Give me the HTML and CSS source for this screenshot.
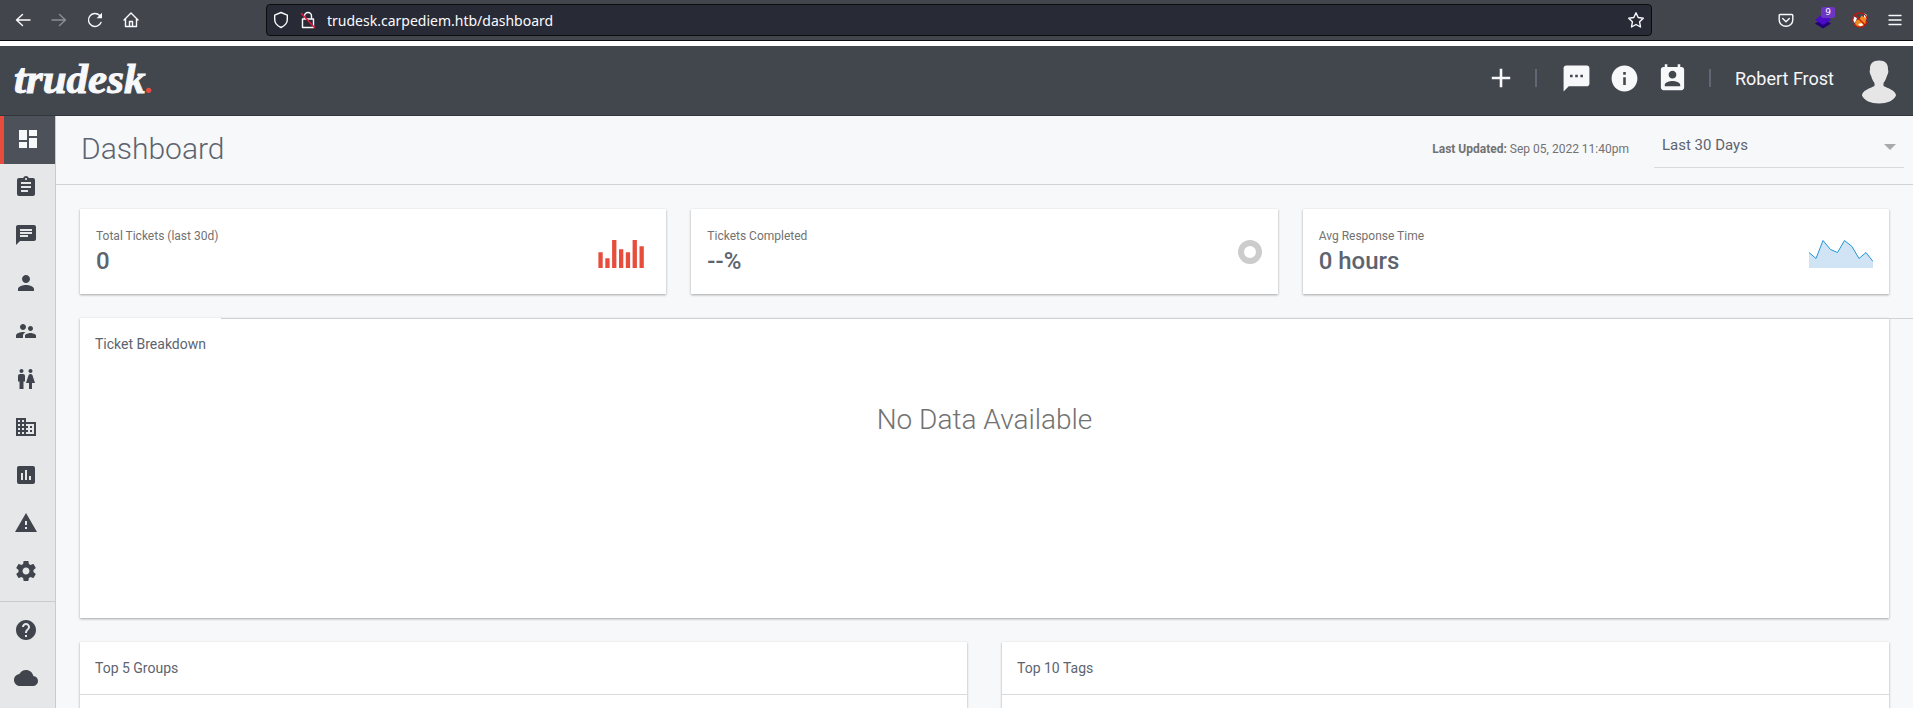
FILE: index.html
```html
<!DOCTYPE html>
<html lang="en">
<head>
<meta charset="utf-8">
<title>Trudesk - Dashboard</title>
<link rel="stylesheet" href="styles.css">
</head>
<body>
<div class="browser">
  <div class="browser-nav">
    <button class="tool" aria-label="Back"><svg width="16" height="16" viewBox="0 0 16 16"><path d="M15 8H1.500M7.500 2.500L1.500 8l6 5.500"/></svg></button>
    <button class="tool dim" aria-label="Forward"><svg width="16" height="16" viewBox="0 0 16 16"><path d="M1 8h13.500M8.500 2.500l6 5.500-6 5.500"/></svg></button>
    <button class="tool" aria-label="Reload"><svg width="16" height="16" viewBox="0 0 16 16"><path d="M14 10.500A6.500 6.500 0 1 1 12.500 3.300"/><path class="solid" d="M15 .8v5.400H9.600z"/></svg></button>
    <button class="tool" aria-label="Home"><svg width="16" height="16" viewBox="0 0 16 16"><path d="M1 8l7-7 7 7M2.500 7v7.500h11V7M6.500 14.500v-5h3v5"/></svg></button>
  </div>
  <div class="urlbar">
    <svg class="line" width="16" height="18" viewBox="0 0 16 18"><path d="M8 1.500l6.300 2.600v4.400c0 4-3 6.500-6.300 8-3.300-1.500-6.300-4-6.300-8V4.100z"/></svg>
    <svg class="line" width="16" height="18" viewBox="0 0 16 18"><path d="M4.500 8V5a3.500 3.500 0 0 1 7 0v3M2.500 8h11v8.500h-11z"/><path class="slash" d="M1.500 2.500l13 14"/></svg>
    <input class="url" type="text" aria-label="Address" value="trudesk.carpediem.htb/dashboard">
    <button class="tool" aria-label="Bookmark"><svg width="18" height="18" viewBox="0 0 18 18"><path d="M9 1.800l2.200 4.700 5.100.7-3.700 3.600.9 5.200L9 13.500 4.500 16l.9-5.200L1.700 7.200l5.100-.7z"/></svg></button>
  </div>
  <div class="browser-ext">
    <button class="tool" aria-label="Pocket"><svg width="16" height="16" viewBox="0 0 16 16"><path d="M2.200 2.500h11.600q1 0 1 1V8a6.800 6.300 0 0 1-13.600 0V3.500q0-1 1-1zM4.700 6.500L8 9.700l3.300-3.200"/></svg></button>
    <button class="tool ext" aria-label="Layers extension"><svg width="18" height="18" viewBox="0 0 18 18"><path class="layer-low" d="M1 12.500L9 8l8 4.500L9 17.500z"/><path class="layer-top" d="M1 9l8-6.500L17 9l-8 5z"/></svg><span class="badge">9</span></button>
    <button class="tool" aria-label="Proxy extension"><svg width="16" height="16" viewBox="0 0 16 16"><path class="fox-white" d="M1 4l4 2-2 5-2-2zM12 1.500l2.500 1L15 7l-3 1z"/><path class="fox" d="M3 12l1-3.500L7.500 7l2-3.500L12 5l2 1-.5 6-3 2.500-5 .5z"/><path class="fox-white" d="M6 12l4-1 1 2-3 1.500z"/><circle class="ban" cx="8" cy="8" r="7.200"/><path class="ban" d="M3 3l10 10"/></svg></button>
    <button class="tool" aria-label="Menu"><svg width="14" height="16" viewBox="0 0 14 16"><path d="M1 3.500h12M1 8h12M1 12.500h12"/></svg></button>
  </div>
</div>

<header class="topbar">
  <a class="logo" href="#">trudesk<span class="dot">.</span></a>
  <div class="actions">
    <button class="action" aria-label="Create ticket"><svg width="26" height="26" viewBox="0 0 24 24"><path d="M20.500 13.200h-7.300v7.300h-2.400v-7.300H3.500v-2.400h7.300V3.500h2.400v7.300h7.300z"/></svg></button>
    <span class="sep"></span>
    <button class="action chat" aria-label="Messages"><svg width="31" height="31" viewBox="0 0 24 24"><path d="M20 2H4c-1.100 0-1.990.9-1.990 2L2 22l4-4h14c1.100 0 2-.9 2-2V4c0-1.100-.9-2-2-2zM9 11H7V9h2v2zm4 0h-2V9h2v2zm4 0h-2V9h2v2z"/></svg></button>
    <button class="action" aria-label="Notices"><svg width="31" height="31" viewBox="0 0 24 24"><path d="M12 2C6.480 2 2 6.480 2 12s4.480 10 10 10 10-4.480 10-10S17.520 2 12 2zm1 15h-2v-6h2v6zm0-8h-2V7h2v2z"/></svg></button>
    <button class="action" aria-label="Online users"><svg width="31" height="31" viewBox="0 0 24 24"><path d="M19 3h-1V1h-2v2H8V1H6v2H5c-1.110 0-2 .9-2 2v14c0 1.100.89 2 2 2h14c1.100 0 2-.9 2-2V5c0-1.100-.9-2-2-2zm-7 3c1.660 0 3 1.340 3 3s-1.340 3-3 3-3-1.340-3-3 1.340-3 3-3zm6 12H6v-1c0-2 4-3.100 6-3.100s6 1.100 6 3.100v1z"/></svg></button>
    <span class="sep wide"></span>
    <a class="user" href="#">Robert Frost</a>
    <svg class="avatar" width="34" height="44" viewBox="0 0 34 44"><path d="M17 .5c6 0 9.300 3 9 9 1 2-.2 5-1.300 7-.8 3-2 5-3.200 6.500v3c4 2 12.500 4.500 12.500 9.500-2 5-9 8-17 8s-15-3-17-8c0-5 8.500-7.500 12.500-9.500v-3C11.300 21.500 10.100 19.500 9.300 16.500 8.200 14.500 7 11.500 8 9.500c-.3-6 3-9 9-9z"/></svg>
  </div>
</header>

<div class="shell">
  <nav class="sidebar">
    <a class="item active" href="#" aria-label="Dashboard"><svg viewBox="0 0 24 24"><path d="M3 13h8V3H3v10zm0 8h8v-6H3v6zm10 0h8V11h-8v10zm0-18v6h8V3h-8z"/></svg></a>
    <a class="item" href="#" aria-label="Tickets"><svg viewBox="0 0 24 24"><path d="M19 3h-4.180C14.400 1.840 13.300 1 12 1c-1.300 0-2.400.84-2.820 2H5c-1.100 0-2 .9-2 2v14c0 1.100.9 2 2 2h14c1.100 0 2-.9 2-2V5c0-1.100-.9-2-2-2zm-7 0c.55 0 1 .45 1 1s-.45 1-1 1-1-.45-1-1 .45-1 1-1zm2 14H7v-2h7v2zm3-4H7v-2h10v2zm0-4H7V7h10v2z"/></svg></a>
    <a class="item" href="#" aria-label="Messages"><svg viewBox="0 0 24 24"><path d="M20 2H4c-1.100 0-1.990.9-1.990 2L2 22l4-4h14c1.100 0 2-.9 2-2V4c0-1.100-.9-2-2-2zM6 9h12v2H6V9zm8 5H6v-2h8v2zm4-6H6V6h12v2z"/></svg></a>
    <a class="item" href="#" aria-label="Accounts"><svg viewBox="0 0 24 24"><path d="M12 12c2.210 0 4-1.790 4-4s-1.790-4-4-4-4 1.790-4 4 1.790 4 4 4zm0 2c-2.670 0-8 1.340-8 4v2h16v-2c0-2.660-5.330-4-8-4z"/></svg></a>
    <a class="item" href="#" aria-label="Groups"><svg viewBox="0 0 24 24"><path d="M16.500 12c1.380 0 2.490-1.120 2.490-2.500S17.880 7 16.500 7C15.120 7 14 8.120 14 9.500s1.120 2.500 2.500 2.500zM9 11c1.660 0 2.990-1.340 2.990-3S10.660 5 9 5C7.340 5 6 6.340 6 8s1.340 3 3 3zm7.500 3c-1.830 0-5.500.92-5.500 2.750V19h11v-2.250c0-1.830-3.670-2.750-5.500-2.750zM9 13c-2.330 0-7 1.170-7 3.500V19h7v-2.250c0-.85.33-2.340 2.370-3.470C10.500 13.100 9.660 13 9 13z"/></svg></a>
    <a class="item" href="#" aria-label="Teams"><svg viewBox="0 0 24 24"><path d="M5.500 22v-7.500H4V9c0-1.100.9-2 2-2h3c1.100 0 2 .9 2 2v5.500H9.500V22h-4zM18 22v-6h3l-2.540-7.630C18.180 7.550 17.420 7 16.560 7h-.12c-.86 0-1.630.55-1.900 1.370L12 16h3v6h3zM7.500 6c1.110 0 2-.89 2-2s-.89-2-2-2-2 .89-2 2 .89 2 2 2zm9 0c1.110 0 2-.89 2-2s-.89-2-2-2-2 .89-2 2 .89 2 2 2z"/></svg></a>
    <a class="item" href="#" aria-label="Departments"><svg viewBox="0 0 24 24"><path d="M12 7V3H2v18h20V7H12zM6 19H4v-2h2v2zm0-4H4v-2h2v2zm0-4H4V9h2v2zm0-4H4V5h2v2zm4 12H8v-2h2v2zm0-4H8v-2h2v2zm0-4H8V9h2v2zm0-4H8V5h2v2zm10 12h-8v-2h2v-2h-2v-2h2v-2h-2V9h8v10zm-2-8h-2v2h2v-2zm0 4h-2v2h2v-2z"/></svg></a>
    <a class="item" href="#" aria-label="Reports"><svg viewBox="0 0 24 24"><path d="M19 3H5c-1.100 0-2 .9-2 2v14c0 1.100.9 2 2 2h14c1.100 0 2-.9 2-2V5c0-1.100-.9-2-2-2zM9 17H7v-7h2v7zm4 0h-2V7h2v10zm4 0h-2v-4h2v4z"/></svg></a>
    <a class="item" href="#" aria-label="Notices"><svg viewBox="0 0 24 24"><path d="M1 21h22L12 2 1 21zm12-3h-2v-2h2v2zm0-4h-2v-4h2v4z"/></svg></a>
    <a class="item" href="#" aria-label="Settings"><svg viewBox="0 0 24 24"><path d="M19.430 12.980c.04-.32.070-.64.070-.98s-.03-.66-.07-.98l2.110-1.650c.19-.15.240-.42.120-.64l-2-3.460c-.12-.22-.39-.3-.61-.22l-2.490 1c-.52-.4-1.080-.73-1.690-.98l-.38-2.650C14.460 2.180 14.250 2 14 2h-4c-.25 0-.46.18-.49.42l-.38 2.650c-.61.25-1.170.59-1.690.98l-2.490-1c-.23-.09-.49 0-.61.22l-2 3.460c-.13.22-.07.49.12.64l2.110 1.650c-.04.32-.07.65-.07.98s.03.66.07.98l-2.110 1.650c-.19.15-.24.42-.12.64l2 3.460c.12.22.39.3.61.22l2.490-1c.52.4 1.080.73 1.690.98l.38 2.650c.03.24.24.42.49.42h4c.25 0 .46-.18.49-.42l.38-2.650c.61-.25 1.170-.59 1.690-.98l2.490 1c.23.090.49 0 .61-.22l2-3.460c.12-.22.070-.49-.12-.64l-2.110-1.650zM12 15.500c-1.930 0-3.500-1.570-3.500-3.500s1.570-3.500 3.500-3.500 3.500 1.570 3.500 3.500-1.570 3.500-3.500 3.500z"/></svg></a>
    <hr class="divider">
    <a class="item" href="#" aria-label="Help"><svg viewBox="0 0 24 24"><path d="M12 2C6.480 2 2 6.480 2 12s4.480 10 10 10 10-4.480 10-10S17.520 2 12 2zm1 17h-2v-2h2v2zm2.070-7.750l-.9.920C13.450 12.900 13 13.500 13 15h-2v-.5c0-1.100.45-2.100 1.170-2.830l1.240-1.260c.37-.36.590-.86.590-1.410 0-1.100-.9-2-2-2s-2 .9-2 2H8c0-2.210 1.790-4 4-4s4 1.790 4 4c0 .88-.36 1.680-.93 2.250z"/></svg></a>
    <a class="item" href="#" aria-label="Cloud"><svg viewBox="0 0 24 24"><path d="M19.350 10.040C18.670 6.590 15.640 4 12 4 9.110 4 6.600 5.640 5.350 8.040 2.340 8.360 0 10.910 0 14c0 3.310 2.690 6 6 6h13c2.760 0 5-2.240 5-5 0-2.640-2.050-4.780-4.650-4.960z"/></svg></a>
  </nav>

  <main class="main">
    <div class="page-head">
      <h1 class="page-title">Dashboard</h1>
      <p class="updated"><strong>Last Updated:</strong> Sep 05, 2022 11:40pm</p>
      <div class="range">
        <select class="range-select" aria-label="Time range"><option>Last 30 Days</option><option>Last 60 Days</option><option>Last 90 Days</option></select>
      </div>
    </div>
    <div class="content">
      <section class="stats">
        <article class="card stat">
          <div><h2 class="stat-label">Total Tickets (last 30d)</h2><p class="stat-value">0</p></div>
          <svg class="chart bars" width="52" height="28" viewBox="0 0 52 28"><path d="M.4 12.200h4.300V28H.4zM7.300 18.300h4.300V28H7.300zM14.100 0h4.300v28h-4.300zM21 9.200h4.300V28H21zM27.800 12.200h4.300V28h-4.300zM34.600 0h4.300v28h-4.300zM41.500 6.200h4.300V28h-4.300z"/></svg>
        </article>
        <article class="card stat">
          <div><h2 class="stat-label">Tickets Completed</h2><p class="stat-value">--%</p></div>
          <svg class="chart donut" width="24" height="24" viewBox="0 0 24 24"><circle cx="12" cy="12" r="9"/></svg>
        </article>
        <article class="card stat">
          <div><h2 class="stat-label">Avg Response Time</h2><p class="stat-value">0 hours</p></div>
          <svg class="chart area" width="64" height="28" viewBox="0 0 64 28"><path class="area-fill" d="M0 12.500l7 6L14 .5l7.500 9 7 3L35.500.5l7.500 6 7 12 7-6 7 9V28H0z"/><path class="area-line" d="M0 12.500l7 6L14 .5l7.500 9 7 3L35.500.5l7.500 6 7 12 7-6 7 9"/></svg>
        </article>
      </section>
      <section class="card breakdown">
        <h2 class="card-title">Ticket Breakdown</h2>
        <p class="empty">No Data Available</p>
        <span class="overline"></span>
      </section>
      <section class="lists">
        <article class="card list"><h2 class="card-title ruled">Top 5 Groups</h2></article>
        <article class="card list"><h2 class="card-title ruled">Top 10 Tags</h2></article>
      </section>
    </div>
  </main>
</div>
</body>
</html>
```
FILE: styles.css
```css
* { box-sizing: border-box; }
body {
  margin: 0;
  height: 100vh;
  overflow: hidden;
  display: flex;
  flex-direction: column;
  background: #f7f8fa;
  font-family: Roboto, "Liberation Sans", sans-serif;
  color: #5d6470;
}
h1, h2, p { margin: 0; font-weight: 400; }
a { text-decoration: none; color: inherit; }
button { border: 0; padding: 0; background: none; display: flex; }

/* browser toolbar */
.browser {
  display: flex;
  align-items: center;
  flex: none;
  height: 41px;
  background: #42454c;
  border-bottom: 1px solid #0c0c0f;
}
.browser-nav {
  display: flex;
  gap: 20px;
  padding-left: 15px;
  width: 266px;
}
.tool { position: relative; }
.tool svg, .line {
  fill: none;
  stroke: #fbfbfe;
  stroke-width: 1.400;
  stroke-linejoin: round;
  stroke-linecap: round;
}
.tool .solid { fill: #fbfbfe; stroke: none; }
.dim { opacity: .4; }
.urlbar {
  flex: 1;
  display: flex;
  align-items: center;
  height: 32px;
  padding: 0 6px;
  gap: 11px;
  background: #282a36;
  border: 1px solid #0c0c0f;
  border-radius: 4px;
}
.line .slash { stroke: #e2183f; stroke-width: 1.600; }
.url {
  flex: 1;
  min-width: 0;
  padding: 0;
  border: 0;
  outline: 0;
  background: none;
  color: #fbfbfe;
  font: 14px "Noto Sans", sans-serif;
}
.browser-ext {
  display: flex;
  align-items: center;
  justify-content: flex-end;
  gap: 20px;
  width: 261px;
  padding-right: 11px;
}
.tool .layer-low { fill: #22007a; stroke: none; }
.tool .layer-top { fill: #4a0cc4; stroke: none; }
.badge {
  position: absolute;
  top: -4px;
  left: 7px;
  width: 14px;
  height: 11px;
  border-radius: 2px;
  background: #6c35c4;
  color: #fff;
  font: 9px/11px "DejaVu Sans", sans-serif;
  text-align: center;
}
.tool .fox { fill: #f08a1c; stroke: none; }
.tool .fox-white { fill: #fff; stroke: none; }
.tool .ban { stroke: #c8140c; stroke-width: 1.200; }

/* application header */
.topbar {
  display: flex;
  align-items: center;
  justify-content: space-between;
  flex: none;
  height: 75px;
  padding: 0 17px 0 14px;
  background: #42464d;
  border-top: 5px solid #fff;
  border-bottom: 1px solid #33363d;
}
.logo {
  color: #f7f8fa;
  font: italic 700 43px/68px "Liberation Serif", serif;
  -webkit-text-stroke: 1px #f7f8fa;
}
.dot {
  color: #e74c3c;
  font-size: 32px;
  -webkit-text-stroke: 0;
}
.actions { display: flex; align-items: center; padding-bottom: 5px; }
.action svg { fill: #f7f8fa; }
.action { margin-right: 17px; }
.sep {
  width: 2px;
  height: 18px;
  margin: 0 24px 0 4px;
  background: #606672;
}
.sep.wide { margin: 0 24px 0 4px; }
.user { color: #f7f8fa; font-size: 18px; }
.avatar { margin-left: 28px; margin-top: 8px; fill: #e6e6e6; }

/* sidebar */
.shell { display: flex; flex: 1; min-height: 0; overflow: hidden; }
.sidebar {
  flex: none;
  width: 56px;
  background: #e5e7e8;
  border-right: 1px solid #c9cbce;
}
.item {
  display: flex;
  align-items: center;
  height: 48px;
  padding: 0 0 2px 14px;
}
.item svg { width: 24px; height: 24px; fill: #40444c; }
.item.active {
  padding-left: 12px;
  background: #4d5159;
  border-left: 4px solid #e74c3c;
}
.item.active svg { fill: #f7f8fa; }
.divider {
  margin: 5px 0;
  border: 0;
  border-top: 1px solid #c9cbce;
}

/* page heading */
.main { flex: 1; min-width: 0; }
.page-head {
  display: flex;
  align-items: center;
  height: 69px;
  padding: 0 9px 3px 25px;
  border-bottom: 1px solid #d0d2d4;
}
.page-title { flex: 1; font-size: 30px; font-weight: 300; }
.updated { color: #727272; font-size: 12px; margin-right: 25px; }
.range {
  position: relative;
  width: 250px;
  margin-top: 4px;
  border-bottom: 1px solid #d8dadc;
}
.range::after {
  content: "";
  position: absolute;
  right: 8px;
  top: 11px;
  border: 6px solid transparent;
  border-top-color: #aaa;
  border-bottom: 0;
}
.range-select {
  display: block;
  appearance: none;
  width: 100%;
  height: 34px;
  padding: 0 8px 10px;
  border: 0;
  background: none;
  color: #5d6470;
  font: 15px Roboto, sans-serif;
}

/* cards */
.content {
  display: flex;
  flex-direction: column;
  gap: 24px;
  padding: 24px;
}
.card {
  background: #fff;
  box-shadow: 0 1px 3px rgba(0, 0, 0, .12), 0 1px 2px rgba(0, 0, 0, .24);
}
.stats { display: grid; grid-template-columns: repeat(3, 1fr); gap: 25px; }
.stat {
  display: flex;
  justify-content: space-between;
  height: 85px;
  padding: 16px;
}
.stat-label { color: #727272; font-size: 12px; line-height: 22px; }
.stat-value { font-size: 24px; font-weight: 500; line-height: 28px; }
.chart { margin-top: 15px; }
.bars { fill: #e74c3c; }
.donut { fill: none; stroke: #ccc; stroke-width: 6; }
.area-fill { fill: #d1e4f6; }
.area-line { fill: none; stroke: #2196d6; }
.breakdown { position: relative; height: 300px; }
.card-title { padding: 0 15px; font-size: 14px; line-height: 52px; }
.ruled { border-bottom: 1px solid #d8dadc; }
.empty {
  margin-top: 30px;
  color: #727272;
  font-size: 28px;
  font-weight: 300;
  line-height: 40px;
  text-align: center;
}
.overline {
  position: absolute;
  top: 0;
  left: 141px;
  right: -24px;
  height: 1px;
  background: #d0d2d4;
}
.lists { display: grid; grid-template-columns: repeat(2, 1fr); gap: 35px; }
.list { height: 300px; }
```
